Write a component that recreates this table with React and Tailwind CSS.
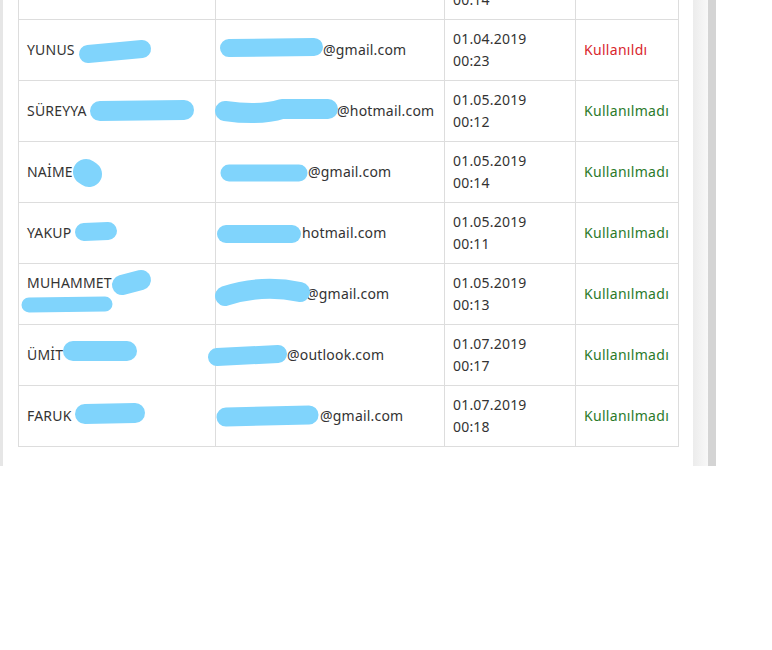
import React from "react";

const rows = [
  { name: "", gap: 0, domain: "", date: "01.04.2019", time: "00:14", used: null },
  { name: "YUNUS", gap: 99, domain: "@gmail.com", date: "01.04.2019", time: "00:23", used: true },
  { name: "SÜREYYA", gap: 113, domain: "@hotmail.com", date: "01.05.2019", time: "00:12", used: false },
  { name: "NAİME", gap: 84, domain: "@gmail.com", date: "01.05.2019", time: "00:14", used: false },
  { name: "YAKUP", gap: 78, domain: "hotmail.com", date: "01.05.2019", time: "00:11", used: false },
  { name: "MUHAMMET", wrap: true, gap: 82, domain: "@gmail.com", date: "01.05.2019", time: "00:13", used: false },
  { name: "ÜMİT", gap: 63, domain: "@outlook.com", date: "01.07.2019", time: "00:17", used: false },
  { name: "FARUK", gap: 96, domain: "@gmail.com", date: "01.07.2019", time: "00:18", used: false },
];

const gapClass = {
  0: "w-0",
  63: "w-[63px]",
  78: "w-[78px]",
  82: "w-[82px]",
  84: "w-[84px]",
  96: "w-[96px]",
  99: "w-[99px]",
  113: "w-[113px]",
};

// redaction brush marks, in page coordinates
const marks = [
  { d: "M88 54 L142 49", w: 18 },
  { d: "M229 48 L314 47", w: 18 },
  { d: "M100 111 L184 110", w: 20 },
  { d: "M225 111 Q260 116 282 109 L328 109", w: 20 },
  { d: "M86 172 L89 174", w: 26 },
  { d: "M229 173 L299 173", w: 17 },
  { d: "M84 232 L108 231", w: 18 },
  { d: "M226 234 L292 234", w: 18 },
  { d: "M122 285 L141 280", w: 20 },
  { d: "M29 305 L105 304", w: 15 },
  { d: "M225 296 Q262 284 300 292", w: 20 },
  { d: "M73 351 L127 351", w: 20 },
  { d: "M217 357 L278 354", w: 18 },
  { d: "M85 414 L135 413", w: 20 },
  { d: "M226 417 L309 415", w: 19 },
];

const App = () => {
  return (
    <div className="w-[772px] h-[650px] bg-white font-['Noto_Sans',sans-serif] text-[14px] leading-[22px] text-[#333] tracking-[0.2px]">
      <div className="flex h-[466px]">
        <div className="w-[3px] bg-[#e6e6e6]"></div>
        <div className="w-[690px] overflow-hidden pl-[15px]">
          <div className="relative w-[660px] -mt-[42px]">
            <table className="w-[660px] border-collapse border border-[#ddd] table-fixed">
              <colgroup>
                <col className="w-[197px]" />
                <col className="w-[229px]" />
                <col className="w-[131px]" />
                <col className="w-[103px]" />
              </colgroup>
              <tbody>
                {rows.map((r, i) => (
                  <tr key={i} className="h-[61px]">
                    <td className="border border-[#ddd] px-2 py-2 align-middle">
                      {r.name}
                      {r.wrap && (
                        <>
                          <br />
                          &nbsp;
                        </>
                      )}
                    </td>
                    <td className="border border-[#ddd] px-2 py-2 align-middle whitespace-nowrap">
                      <span className={"inline-block " + gapClass[r.gap]}></span>
                      {r.domain}
                    </td>
                    <td className="border border-[#ddd] px-2 py-2 align-middle">
                      {r.date}
                      <br />
                      {r.time}
                    </td>
                    <td
                      className={
                        "border border-[#ddd] px-2 py-2 align-middle tracking-[0.3px] " +
                        (r.used ? "text-[#d9262e]" : "text-[#2b7a2b]")
                      }
                    >
                      {r.used === null ? "" : r.used ? "Kullanıldı" : "Kullanılmadı"}
                    </td>
                  </tr>
                ))}
              </tbody>
            </table>
            <svg
              className="absolute left-0 top-0 pointer-events-none"
              width="660"
              height="488"
              viewBox="18 -42 660 488"
            >
              {marks.map((m, i) => (
                <path
                  key={i}
                  d={m.d}
                  stroke="#80d4fc"
                  strokeWidth={m.w}
                  strokeLinecap="round"
                  strokeLinejoin="round"
                  fill="none"
                />
              ))}
            </svg>
          </div>
        </div>
        <div className="w-[15px] bg-gradient-to-r from-[#ececec] to-[#f8f8f8]"></div>
        <div className="w-[8px] bg-[#d4d4d4]"></div>
      </div>
    </div>
  );
};

export default App;
